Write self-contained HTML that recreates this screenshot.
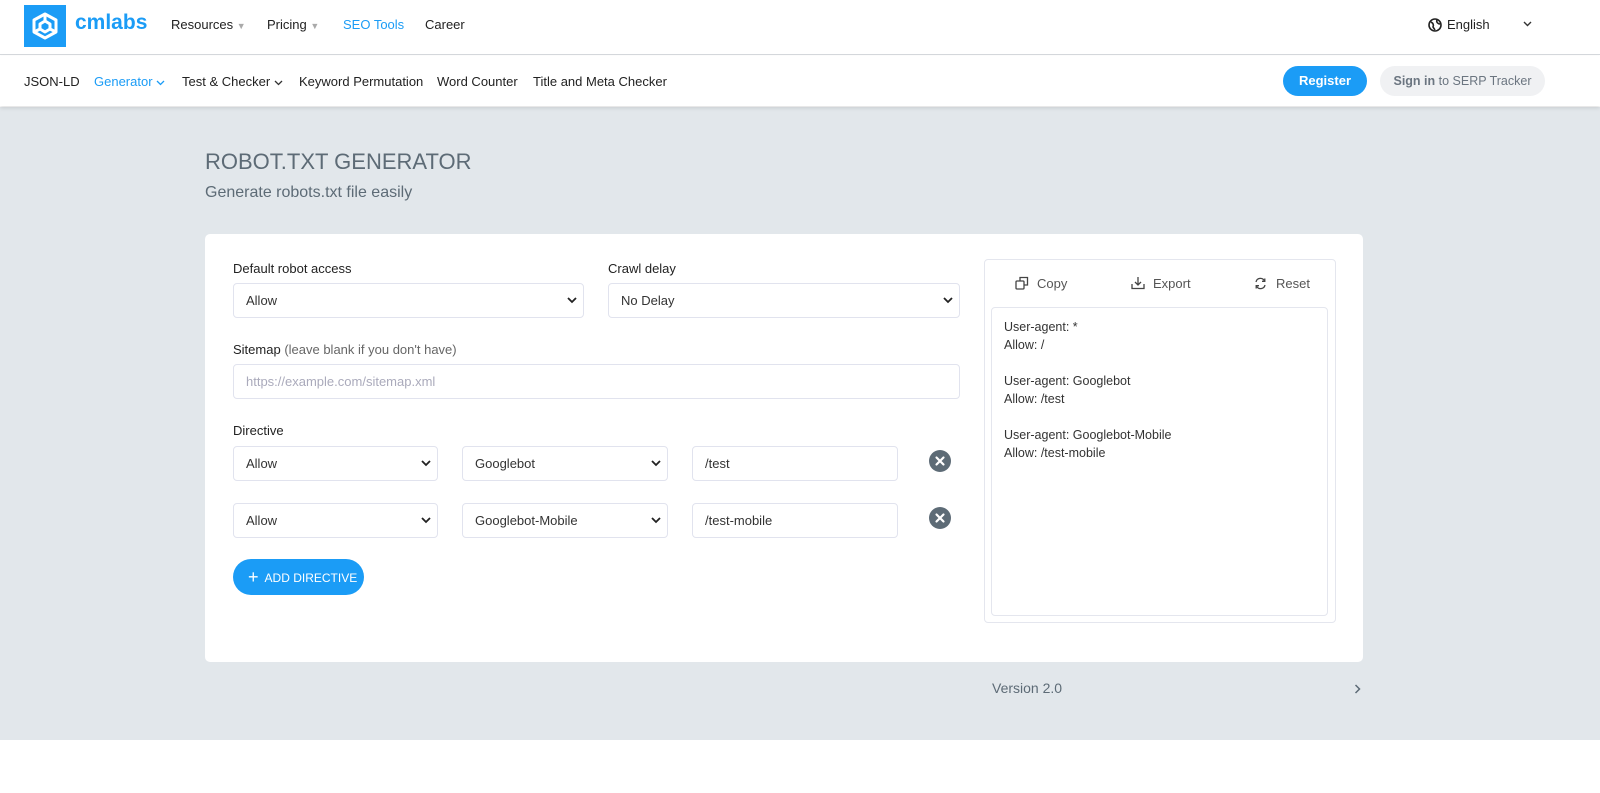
<!DOCTYPE html>
<html><head><meta charset="utf-8"><style>
*{box-sizing:border-box;margin:0;padding:0}
body{width:1600px;height:793px;overflow:hidden;background:#fff;font-family:"Liberation Sans",Arial,sans-serif;color:#222;position:relative}
.a{position:absolute}
.t{font-size:13px;color:#222;white-space:nowrap}
.sel,.inp{position:absolute;background:#fff;border:1px solid #e1e3ee;border-radius:4px;font-size:13px;color:#333;padding-left:12px;display:flex;align-items:center;white-space:nowrap}
.sel svg{position:absolute;right:6px;top:50%;margin-top:-4px}
.x{position:absolute;width:22px;height:22px;border-radius:50%;background:#5d6b76}
</style></head><body>
<div class="a" style="left:0;top:0;width:1600px;height:55px;background:#fff;border-bottom:1px solid #d5d8dc"></div>
<div class="a" style="left:24px;top:5px;width:42px;height:42px;background:#1b9cf6">
<svg width="42" height="42" viewBox="0 0 42 42"><g fill="none" stroke="#fff" stroke-width="3" stroke-linejoin="round"><path d="M21 9 L32 15 V27 L21 33 L10 27 V15 Z"/><path d="M21 16 L26 19 V24 L21 27 L16 24 V19 Z"/><path d="M21 9 V16 M32 27 L26 24 M10 27 L16 24"/></g></svg></div>
<div class="a" style="left:75px;top:11px;font-size:21px;font-weight:bold;color:#1b9cf6">cmlabs</div>
<div class="a t" style="left:171px;top:17px">Resources <span style="color:#aaa;font-size:9px">▼</span></div>
<div class="a t" style="left:267px;top:17px">Pricing <span style="color:#aaa;font-size:9px">▼</span></div>
<div class="a t" style="left:343px;top:17px;color:#1b9cf6">SEO Tools</div>
<div class="a t" style="left:425px;top:17px">Career</div>
<svg class="a" style="left:1428px;top:18px" width="14" height="14" viewBox="0 0 14 14"><circle cx="7" cy="7" r="6" fill="none" stroke="#222" stroke-width="1.6"/><path d="M3 4 C5 5 6 7 5 9 L7 12 M9 2 C8 4 10 6 12 6" fill="none" stroke="#222" stroke-width="1.6"/></svg>
<div class="a t" style="left:1447px;top:17px">English</div>
<svg class="a" style="left:1523px;top:21px" width="9" height="6" viewBox="0 0 9 6"><path d="M1 1L4.5 4.5L8 1" fill="none" stroke="#333" stroke-width="1.4"/></svg>
<div class="a" style="left:0;top:56px;width:1600px;height:50px;background:#fff;box-shadow:0 2px 4px rgba(0,0,0,.12)"></div>
<div class="a t" style="left:24px;top:74px">JSON-LD</div>
<div class="a t" style="left:94px;top:74px;color:#1b9cf6">Generator <svg width="9" height="6" viewBox="0 0 9 6"><path d="M1 1L4.5 4.5L8 1" fill="none" stroke="#1b9cf6" stroke-width="1.3"/></svg></div>
<div class="a t" style="left:182px;top:74px">Test &amp; Checker <svg width="9" height="6" viewBox="0 0 9 6"><path d="M1 1L4.5 4.5L8 1" fill="none" stroke="#333" stroke-width="1.3"/></svg></div>
<div class="a t" style="left:299px;top:74px">Keyword Permutation</div>
<div class="a t" style="left:437px;top:74px">Word Counter</div>
<div class="a t" style="left:533px;top:74px">Title and Meta Checker</div>
<div class="a" style="left:1283px;top:66px;width:84px;height:30px;border-radius:15px;background:#1b9cf6;color:#fff;font-size:13px;font-weight:bold;text-align:center;line-height:30px">Register</div>
<div class="a" style="left:1380px;top:66px;width:165px;height:30px;border-radius:15px;background:#f0f1f3;color:#6b7580;font-size:12.5px;text-align:center;line-height:30px;white-space:nowrap"><b>Sign in</b> to SERP Tracker</div>
<div class="a" style="left:0;top:107px;width:1600px;height:633px;background:#e2e7eb;z-index:-1"></div>
<div class="a" style="left:205px;top:149px;font-size:22px;color:#5d6b76;white-space:nowrap">ROBOT.TXT GENERATOR</div>
<div class="a" style="left:205px;top:184px;font-size:16px;color:#5d6b76">Generate robots.txt file easily</div>
<div class="a" style="left:205px;top:234px;width:1158px;height:428px;background:#fff;border-radius:5px"></div>
<div class="a t" style="left:233px;top:261px">Default robot access</div>
<div class="sel" style="left:233px;top:283px;width:351px;height:35px">Allow<svg width="10" height="7" viewBox="0 0 10 7"><path d="M1 1L5 5L9 1" fill="none" stroke="#222" stroke-width="1.8"/></svg></div>
<div class="a t" style="left:608px;top:261px">Crawl delay</div>
<div class="sel" style="left:608px;top:283px;width:352px;height:35px">No Delay<svg width="10" height="7" viewBox="0 0 10 7"><path d="M1 1L5 5L9 1" fill="none" stroke="#222" stroke-width="1.8"/></svg></div>
<div class="a t" style="left:233px;top:342px">Sitemap <span style="color:#666">(leave blank if you don't have)</span></div>
<div class="inp" style="left:233px;top:364px;width:727px;height:35px;color:#aab">https://example.com/sitemap.xml</div>
<div class="a t" style="left:233px;top:423px">Directive</div>
<div class="sel" style="left:233px;top:446px;width:205px;height:35px">Allow<svg width="10" height="7" viewBox="0 0 10 7"><path d="M1 1L5 5L9 1" fill="none" stroke="#222" stroke-width="1.8"/></svg></div>
<div class="sel" style="left:462px;top:446px;width:206px;height:35px">Googlebot<svg width="10" height="7" viewBox="0 0 10 7"><path d="M1 1L5 5L9 1" fill="none" stroke="#222" stroke-width="1.8"/></svg></div>
<div class="inp" style="left:692px;top:446px;width:206px;height:35px">/test</div>
<div class="x" style="left:929px;top:450px"><svg width="22" height="22" viewBox="0 0 22 22"><path d="M7.5 7.5L14.5 14.5M14.5 7.5L7.5 14.5" stroke="#fff" stroke-width="2.2" stroke-linecap="round"/></svg></div>
<div class="sel" style="left:233px;top:503px;width:205px;height:35px">Allow<svg width="10" height="7" viewBox="0 0 10 7"><path d="M1 1L5 5L9 1" fill="none" stroke="#222" stroke-width="1.8"/></svg></div>
<div class="sel" style="left:462px;top:503px;width:206px;height:35px">Googlebot-Mobile<svg width="10" height="7" viewBox="0 0 10 7"><path d="M1 1L5 5L9 1" fill="none" stroke="#222" stroke-width="1.8"/></svg></div>
<div class="inp" style="left:692px;top:503px;width:206px;height:35px">/test-mobile</div>
<div class="x" style="left:929px;top:507px"><svg width="22" height="22" viewBox="0 0 22 22"><path d="M7.5 7.5L14.5 14.5M14.5 7.5L7.5 14.5" stroke="#fff" stroke-width="2.2" stroke-linecap="round"/></svg></div>
<div class="a" style="left:233px;top:559px;width:131px;height:36px;border-radius:18px;background:#1b9cf6;color:#fff;font-size:12px;line-height:36px;padding-left:15px;white-space:nowrap"><span style="font-size:18px;vertical-align:-1px">+</span>&nbsp; ADD DIRECTIVE</div>
<div class="a" style="left:984px;top:259px;width:352px;height:364px;border:1px solid #e4e6ee;border-radius:4px"></div>
<svg class="a" style="left:1015px;top:276px" width="14" height="14" viewBox="0 0 14 14"><g fill="none" stroke="#444" stroke-width="1.3"><rect x="1" y="5" width="8" height="8" rx="1"/><path d="M5 5V1.5H12.5V9H9"/></g></svg>
<div class="a t" style="left:1037px;top:276px;color:#555">Copy</div>
<svg class="a" style="left:1131px;top:276px" width="14" height="14" viewBox="0 0 14 14"><g fill="none" stroke="#444" stroke-width="1.3"><path d="M1 8V12.5H13V8M7 1V9M4 6L7 9L10 6"/></g></svg>
<div class="a t" style="left:1153px;top:276px;color:#555">Export</div>
<svg class="a" style="left:1254px;top:277px" width="13" height="13" viewBox="0 0 13 13"><g fill="none" stroke="#444" stroke-width="1.3"><path d="M2 5A4.5 4.5 0 0 1 10.5 4M11 8A4.5 4.5 0 0 1 2.5 9"/><path d="M10.8 1.5V4.3H8M2.2 11.5V8.7H5"/></g></svg>
<div class="a t" style="left:1276px;top:276px;color:#555">Reset</div>
<div class="a" style="left:991px;top:307px;width:337px;height:309px;border:1px solid #e4e6ee;border-radius:4px"></div>
<div class="a" style="left:1004px;top:318px;font-size:12.5px;line-height:18px;color:#333">User-agent: *<br>Allow: /<br><br>User-agent: Googlebot<br>Allow: /test<br><br>User-agent: Googlebot-Mobile<br>Allow: /test-mobile</div>
<div class="a" style="left:992px;top:680px;font-size:14px;color:#5d6b76">Version 2.0</div>
<svg class="a" style="left:1354px;top:684px" width="7" height="10" viewBox="0 0 7 10"><path d="M1.5 1L5.5 5L1.5 9" fill="none" stroke="#5d6b76" stroke-width="1.5"/></svg>
</body></html>
